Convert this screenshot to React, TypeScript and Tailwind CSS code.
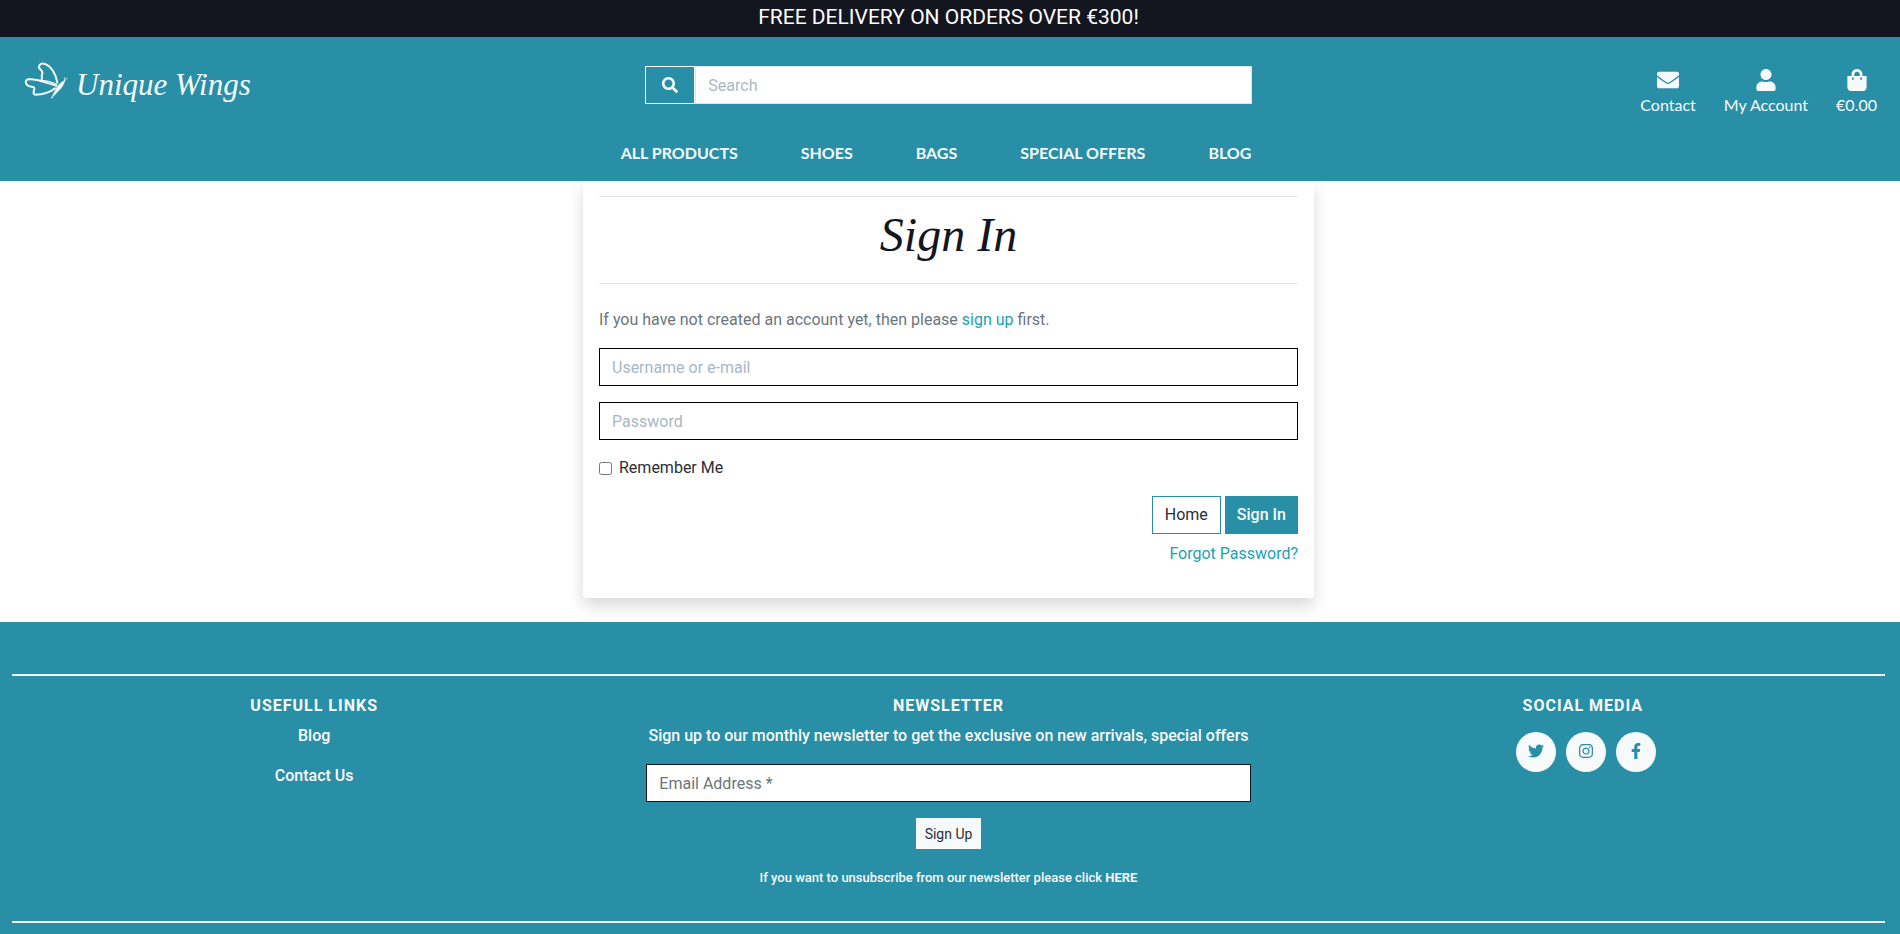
import type { ReactNode } from "react";
import {
  FaEnvelope,
  FaFacebookF,
  FaInstagram,
  FaSearch,
  FaShoppingBag,
  FaTwitter,
  FaUser,
} from "react-icons/fa";

const navItems = ["All Products", "Shoes", "Bags", "Special Offers", "Blog"];

function Butterfly() {
  return (
    <svg
      viewBox="12 20 132 114"
      className="h-[38px] w-11"
      fill="none"
      stroke="currentColor"
      strokeWidth="6"
      strokeLinecap="round"
      strokeLinejoin="round"
      aria-hidden="true"
    >
      <path d="M112 82C108 58 94 30 72 25C60 22 53 34 60 41C66 46 70 50 66 58C63 63 68 66 65 71" />
      <path d="M109 91C84 84 52 70 26 72C15 74 15 83 22 90C30 97 42 91 43 99C44 106 35 114 45 118C68 118 92 110 105 99" />
      <path d="M58 75C76 74 94 80 110 87" strokeWidth="3.500" />
      <path d="M134 76C124 79 117 88 110 97L94 129C100 124 108 113 118 104C127 94 132 86 134 76Z" fill="currentColor" strokeWidth="2" />
      <path d="M133 77C137 72 131 67 133 66M134 76C142 73 137 68 141 68" strokeWidth="2.500" />
    </svg>
  );
}

function HeaderLink({ icon, label }: { icon: ReactNode; label: string }) {
  return (
    <a href="#" className="flex flex-col items-center gap-1">
      {icon}
      <span>{label}</span>
    </a>
  );
}

function Header() {
  return (
    <header className="relative z-10 bg-[#298fa6] font-[Lato,sans-serif] text-[#f7fafb]">
      <div className="h-[37px] bg-[#13161f] pr-[3px] text-center font-[Roboto,sans-serif] text-[21px] leading-[34px] text-white">
        FREE DELIVERY ON ORDERS OVER €300!
      </div>
      <div className="grid h-[92px] grid-cols-3 pt-[25px]">
        <a
          href="#"
          className="flex items-start gap-2 pl-6 font-['Liberation_Serif',serif] text-[31px] leading-[46px] italic"
        >
          <Butterfly />
          <span>Unique Wings</span>
        </a>
        <form className="mr-[3px] flex px-3 pt-1" onSubmit={(e) => e.preventDefault()}>
          <button
            type="submit"
            aria-label="Search"
            className="flex h-[38px] w-[50px] items-center justify-center border border-white"
          >
            <FaSearch size={16} />
          </button>
          <input
            type="search"
            aria-label="Search"
            placeholder="Search"
            className="h-[38px] min-w-0 flex-1 border border-[#dee2e6] bg-white px-3 font-[Roboto,sans-serif] text-base text-gray-700 placeholder:text-[#aab7c4]"
          />
        </form>
        <div className="flex items-start justify-end gap-7 pt-[7px] pr-[23px] text-base leading-5">
          <HeaderLink icon={<FaEnvelope size={22} />} label="Contact" />
          <HeaderLink icon={<FaUser size={22} />} label="My Account" />
          <HeaderLink icon={<FaShoppingBag size={22} />} label="€0.00" />
        </div>
      </div>
      <nav className="flex h-[52px] justify-center gap-[63px] pt-3 pr-7 text-base leading-6 font-bold uppercase">
        {navItems.map((item) => (
          <a key={item} href="#">
            {item}
          </a>
        ))}
      </nav>
    </header>
  );
}

const fieldClass =
  "block h-[38px] w-full border border-black bg-white px-3 text-base text-gray-700 placeholder:text-[#aab7c4]";

function SignInCard() {
  return (
    <main className="flex justify-center pr-[3px] pb-6">
      <section className="w-full max-w-[731px] rounded-b bg-white px-4 pt-[15px] pb-8 shadow-[0_8px_16px_rgba(0,0,0,0.15)]">
        <h1 className="border-y border-[#e3e4e5] pt-3 pb-[22px] text-center font-['Liberation_Serif',serif] text-5xl leading-[52px] text-[#13161f] italic">
          Sign In
        </h1>
        <p className="mt-6 leading-6 text-[#6c757d]">
          If you have not created an account yet, then please{" "}
          <a href="#" className="text-[#17a2b8]">
            sign up
          </a>{" "}
          first.
        </p>
        <form className="mt-4" onSubmit={(e) => e.preventDefault()}>
          <div className="flex flex-col gap-4">
            <input aria-label="Username or e-mail" placeholder="Username or e-mail" className={fieldClass} />
            <input type="password" aria-label="Password" placeholder="Password" className={fieldClass} />
          </div>
          <label className="mt-4 flex items-center gap-[7px] leading-6 text-[#2b2d38]">
            <input type="checkbox" className="size-[13px]" />
            Remember Me
          </label>
          <div className="mt-4 flex justify-end gap-1">
            <a href="#" className="h-[38px] border border-[#298fa6] px-3 leading-9 text-[#2b2d38]">
              Home
            </a>
            <button
              type="submit"
              className="h-[38px] bg-[#298fa6] px-3 leading-9 font-medium text-[#f7fafb]"
            >
              Sign In
            </button>
          </div>
          <div className="mt-2 text-right leading-6">
            <a href="#" className="text-[#17a2b8]">
              Forgot Password?
            </a>
          </div>
        </form>
      </section>
    </main>
  );
}

function FooterTitle({ children }: { children: ReactNode }) {
  return <h2 className="text-base leading-5 font-bold tracking-[1px] uppercase">{children}</h2>;
}

function SocialLink({ label, children }: { label: string; children: ReactNode }) {
  return (
    <a
      href="#"
      aria-label={label}
      className="flex size-10 items-center justify-center rounded-full bg-[#f7fafb] pb-[2px] text-[#298fa6]"
    >
      {children}
    </a>
  );
}

function Footer() {
  return (
    <footer className="relative flex-1 bg-[#298fa6] pt-[52px] pb-[11px] text-[#f7fafb]">
      <div className="mr-[15px] ml-3 border-y-2 border-[#f0f5f7] pt-5 pb-[31px]">
        <div className="-mx-[15px] grid grid-cols-3 text-center">
          <div className="px-[15px]">
            <FooterTitle>Usefull Links</FooterTitle>
            <ul className="mt-2 flex flex-col gap-4 leading-6 font-medium">
              <li>
                <a href="#">Blog</a>
              </li>
              <li>
                <a href="#">Contact Us</a>
              </li>
            </ul>
          </div>
          <div className="px-[15px]">
            <FooterTitle>Newsletter</FooterTitle>
            <p className="mt-2 leading-6 font-medium">
              Sign up to our monthly newsletter to get the exclusive on new arrivals, special offers
            </p>
            <form className="mt-4" onSubmit={(e) => e.preventDefault()}>
              <input
                type="email"
                aria-label="Email Address"
                placeholder="Email Address *"
                className="block h-[38px] w-full border border-[#13161f] bg-white px-3 text-base text-gray-700 placeholder:text-[#6c757d]"
              />
              <button type="submit" className="mt-4 h-[31px] bg-[#f7fafb] px-[9px] text-sm text-[#2b2d38]">
                Sign Up
              </button>
            </form>
            <p className="mt-[17px] text-[13px] leading-6 font-medium">
              If you want to unsubscribe from our newsletter please click{" "}
              <a href="#" className="font-bold">
                HERE
              </a>
            </p>
          </div>
          <div className="px-[15px]">
            <FooterTitle>Social Media</FooterTitle>
            <div className="mt-4 flex justify-center gap-[10px] pl-[6px]">
              <SocialLink label="Twitter">
                <FaTwitter size={16} />
              </SocialLink>
              <SocialLink label="Instagram">
                <FaInstagram size={16} />
              </SocialLink>
              <SocialLink label="Facebook">
                <FaFacebookF size={16} />
              </SocialLink>
            </div>
          </div>
        </div>
      </div>
    </footer>
  );
}

export default function App() {
  return (
    <div className="flex min-h-screen flex-col overflow-x-hidden bg-white font-[Roboto,sans-serif] text-base">
      <Header />
      <SignInCard />
      <Footer />
    </div>
  );
}
